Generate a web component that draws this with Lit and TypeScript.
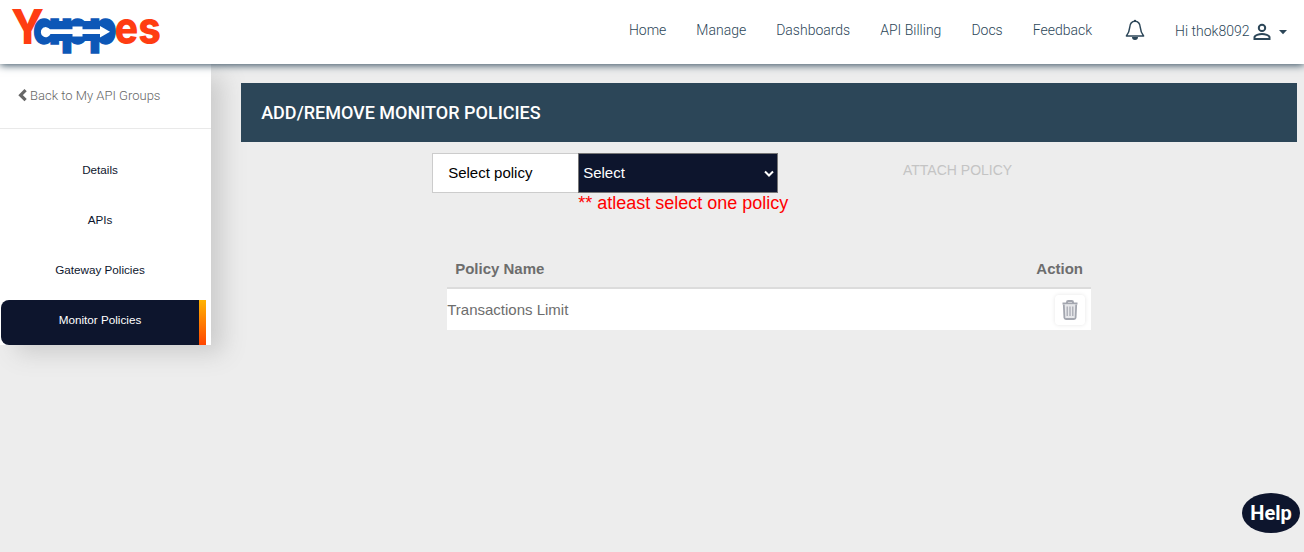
import { LitElement, html, svg, css } from "lit";
import { customElement, state } from "lit/decorators.js";

@customElement("app-logo")
class AppLogo extends LitElement {
  static styles = css`
    :host { display: block; width: 150px; height: 48px; }
    svg { display: block; overflow: visible; }
    text { font-family: Inter, "Liberation Sans", sans-serif; font-weight: 800; font-size: 46px; }
    .y { font-size: 48px; }
    .red { fill: #ff3d12; }
    .blue { fill: #0d57b7; stroke: #0d57b7; stroke-width: 1.4; font-feature-settings: "cv11" 1; }
    .bar { fill: #0d57b7; }
    .arrow { fill: #fff; }
  `;
  render() {
    return html`<svg width="150" height="48" viewBox="0 0 150 48">
      ${svg`
        <text class="red y" x="0" y="36" textLength="33" lengthAdjust="spacingAndGlyphs">Y</text>
        <text class="blue" x="22" y="35.500" textLength="83.500" lengthAdjust="spacingAndGlyphs">app</text>
        <text class="red" x="103.500" y="35.500" textLength="46.500" lengthAdjust="spacingAndGlyphs">es</text>
        <path class="bar" d="M33 13h66v20H33z"></path>
        <path class="arrow" d="M39 21.300h22.500v-2.800h10v2.800H89V18l10 5.700-10 5.800V26H71.500v2.500h-10V26H39.500a5 5 0 1 1-.5-4.700z"></path>
      `}
    </svg>`;
  }
}

@customElement("app-header")
class AppHeader extends LitElement {
  static styles = css`
    :host {
      display: flex; box-sizing: border-box; height: 64px; background: #fff; color: #2c4658;
      font: 300 14px/20px Roboto, sans-serif; padding: 0 17px 0 11px; justify-content: space-between;
      box-shadow: 0 1px 8px 0 #2c4658; position: relative; z-index: 2;
    }
    app-logo { margin-top: 8px; }
    nav { display: flex; gap: 30px; padding-top: 20px; }
    svg { display: block; }
    .right { display: flex; }
    .bell { margin: 19px 0 0 33px; }
    .user { display: flex; margin: 21px 0 0 30px; }
    .person { margin: 0 0 0 2px; }
    .caret { margin: 9px 0 0 7.500px; }
  `;
  render() {
    return html`
      <app-logo></app-logo>
      <div class="right">
        <nav>
          ${["Home", "Manage", "Dashboards", "API Billing", "Docs", "Feedback"].map((t) => html`<span>${t}</span>`)}
        </nav>
        <svg class="bell" width="20" height="22" viewBox="0 0 20 22">
          <path d="M10 2.300C6.700 2.300 5 4.900 4.700 8.500 4.400 12.500 3.500 14.300 1.400 17h17.200C16.500 14.300 15.600 12.500 15.300 8.500 15 4.900 13.300 2.300 10 2.300z" fill="none" stroke="#2c4658" stroke-width="1.500" stroke-linejoin="round"></path>
          <path d="M8.800 2.300V1.900a1.200 1.200 0 0 1 2.400 0V2.300zM7 18h6a3 3 0 0 1-6 0z" fill="#2c4658"></path>
        </svg>
        <div class="user">
          <span>Hi thok8092</span>
          <svg class="person" width="20" height="20" viewBox="0 0 20 20" fill="none" stroke="#2c4658" stroke-width="2">
            <circle cx="10" cy="6.900" r="3.200"></circle>
            <path d="M2.500 18v-1.800c0-2 4.700-3.200 7.500-3.200s7.500 1.200 7.500 3.200V18z"></path>
          </svg>
          <svg class="caret" width="8" height="5" viewBox="0 0 8 5"><path d="M0 0h8L4 4.200z" fill="#2c4658"></path></svg>
        </div>
      </div>
    `;
  }
}

@customElement("app-sidebar")
class AppSidebar extends LitElement {
  static styles = css`
    :host {
      display: block; width: 211px; height: 281px; background: #fff; flex: none;
      box-shadow: 14px 10px 22px -2px #ccc; font: 11.700px/20px "Liberation Sans", Arial, sans-serif; color: #0d152d;
    }
    .back {
      display: flex; box-sizing: border-box; height: 65px; padding: 22px 0 0 18px; border-bottom: 1px solid #e9e9e9;
      font: 300 13px/20px Roboto, sans-serif; color: #666;
    }
    .back svg { margin: 3px 2px 0 0; }
    .items { padding: 21px 5px 0 1px; display: flex; flex-direction: column; gap: 5px; }
    .item { box-sizing: border-box; height: 45px; padding: 10px 7px 0 0; text-align: center; }
    .active { display: flex; padding: 0; color: #fff; background: #0d152d; border-radius: 8px 0 0 8px; }
    .label { flex: 1; padding-top: 10px; }
    .bar { width: 7px; background: linear-gradient(#ffb300, #ff4500); }
  `;
  render() {
    return html`
      <div class="back">
        <svg width="10" height="13" viewBox="0 0 10 13"><path d="M7.600 1.200 2.600 6.200l5 5" fill="none" stroke="#666" stroke-width="3.200"></path></svg>
        <span>Back to My API Groups</span>
      </div>
      <div class="items">
        ${["Details", "APIs", "Gateway Policies"].map((t) => html`<div class="item">${t}</div>`)}
        <div class="item active"><span class="label">Monitor Policies</span><span class="bar"></span></div>
      </div>
    `;
  }
}

@customElement("app-root")
class AppRoot extends LitElement {
  @state() private policies = ["Transactions Limit"];

  static styles = css`
    :host {
      display: block; height: 552px; overflow: hidden; background: #ededed; position: relative;
      font: 15px/20px "Liberation Sans", Arial, sans-serif;
    }
    .body { display: flex; gap: 30px; }
    main { width: 1056px; padding-top: 19px; position: relative; }
    h1 {
      margin: 0; height: 59px; padding-left: 20.200px; background: #2c4658; color: #fff;
      font: 500 18px/59px Roboto, sans-serif;
    }
    .form { display: flex; padding: 11px 0 0 191px; }
    .name {
      box-sizing: border-box; width: 146px; height: 40px; padding: 9px 15.200px; color: #000;
      background: #fff; border: 1px solid #ccc; border-right: 0;
    }
    .field { width: 325px; }
    .select {
      box-sizing: border-box; width: 200px; height: 40px; border: 1px solid #767676; background: #0d152d;
      color: #fff; display: flex; justify-content: space-between; padding: 9px 3px 0 4.200px;
    }
    .select svg { margin-top: 7px; }
    .error { color: #f00; font-size: 18px; line-height: 20px; padding-left: 0.200px; }
    .attach { color: #c4c4c4; font-size: 14px; line-height: 34px; }
    .table { margin: 46px 0 0 206px; width: 644px; color: #6d6d6d; }
    .head {
      display: flex; justify-content: space-between; font-weight: 700; padding: 0 8px 8px 8.200px;
      border-bottom: 2px solid #dcdcdc;
    }
    .row {
      display: flex; justify-content: space-between; align-items: center; height: 41px; background: #fff;
      padding: 0 6px 0 0.200px;
    }
    .trash {
      width: 30px; height: 30px; border-radius: 4px; display: flex; align-items: center; justify-content: center;
      box-shadow: 0 0 4px rgba(0, 0, 0, 0.1);
    }
    .help {
      position: absolute; right: 4px; bottom: 19px; width: 58px; height: 40px; border-radius: 50%;
      background: #0d152d; color: #fff; text-align: center; font: 700 20px/40px Roboto, sans-serif;
    }
  `;

  render() {
    return html`
      <app-header></app-header>
      <div class="body">
        <app-sidebar></app-sidebar>
        <main>
          <h1>ADD/REMOVE MONITOR POLICIES</h1>
          <div class="form">
            <div class="name">Select policy</div>
            <div class="field">
              <div class="select">
                <span>Select</span>
                <svg width="10" height="8" viewBox="0 0 10 8"><path d="M1 1.500l4 4 4-4" fill="none" stroke="#fff" stroke-width="2"></path></svg>
              </div>
              <div class="error">** atleast select one policy</div>
            </div>
            <div class="attach">ATTACH POLICY</div>
          </div>
          <div class="table">
            <div class="head"><span>Policy Name</span><span>Action</span></div>
            ${this.policies.map((p) => html`
              <div class="row">
                <span>${p}</span>
                <span class="trash">
                  <svg width="16" height="20" viewBox="0 0 16 20" fill="none" stroke="#a3a6af" stroke-width="1.800">
                    <path d="M0.500 3.500h15M5 3V2.200Q5 1 6.200 1h3.600Q11 1 11 2.200V3" stroke-width="2"></path>
                    <path d="M1.800 4.500l.6 13.200q.1 1.300 1.600 1.300h8q1.500 0 1.600-1.300L14.200 4.500" fill="#e6e7ea"></path>
                    <path d="M5.200 6.500v9.500M8 6.500v9.500M10.800 6.500v9.500" stroke-width="1.200"></path>
                  </svg>
                </span>
              </div>
            `)}
          </div>
        </main>
      </div>
      <div class="help">Help</div>
    `;
  }
}
